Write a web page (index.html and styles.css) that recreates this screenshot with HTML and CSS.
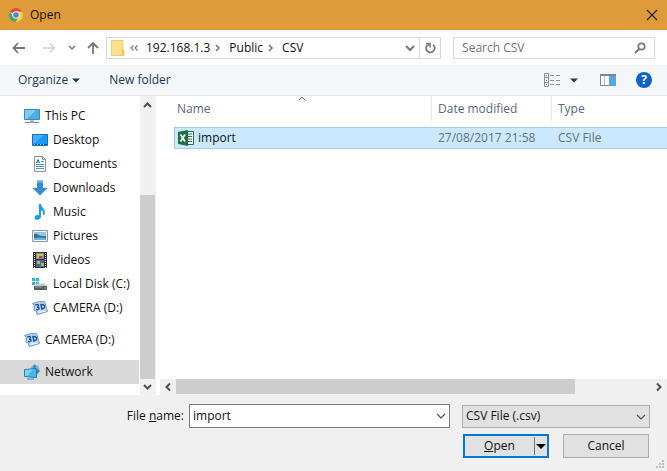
FILE: index.html
```html
<!DOCTYPE html>
<html lang="en">
<head>
<meta charset="utf-8">
<title>Open</title>
<link rel="stylesheet" href="styles.css">
</head>
<body>
<div class="dialog">
  <header class="titlebar">
    <svg class="icon" viewBox="0 0 16 16">
      <circle cx="8" cy="8" r="7" fill="#fbd03a"/>
      <path d="M8 8 1.9 4.5A7 7 0 0 1 14.1 4.5H8z" fill="#e2453a"/>
      <path d="M1.9 4.5A7 7 0 0 0 7.6 15L10.8 9.6 8 8 4.6 9z" fill="#3fa757"/>
      <circle cx="8" cy="8" r="3.7" fill="#f4f0e8"/>
      <circle cx="8" cy="8" r="2.8" fill="#4a83e8"/>
    </svg>
    <h1 class="title">Open</h1>
    <button class="close" aria-label="Close"><svg width="12" height="12" viewBox="0 0 12 12"><path d="M1 1 11 11M11 1 1 11" stroke="#222" stroke-width="1.2"/></svg></button>
  </header>

  <nav class="navbar">
    <div class="history">
      <button class="bare" aria-label="Back"><svg width="14" height="12" viewBox="0 0 14 12"><path d="M6 1 1.5 6 6 11M1.5 6H13" class="stroke" stroke-width="1.8"/></svg></button>
      <button class="bare forward" aria-label="Forward"><svg width="14" height="12" viewBox="0 0 14 12"><path d="M8 1.5 12.5 6 8 10.5M12.5 6H1" class="stroke pale" stroke-width="1.5"/></svg></button>
      <button class="bare recent" aria-label="Recent locations"><svg width="8" height="6" viewBox="0 0 8 6"><path d="M1 1 4 4 7 1" class="stroke" stroke-width="1.5"/></svg></button>
      <button class="bare" aria-label="Up"><svg width="14" height="14" viewBox="0 0 14 14"><path d="M2 7 7 2 12 7M7 2V13" class="stroke" stroke-width="1.8"/></svg></button>
    </div>
    <div class="address">
      <svg class="folder" width="14" height="16" viewBox="0 0 14 16"><path d="M.5.5H12V10L13 11V15.5H.5z" fill="#fce08c" stroke="#efcb68"/><path d="M11 9.5H13V15.5H10.500z" fill="#f0c958"/></svg>
      <svg class="overflow" width="8" height="6" viewBox="0 0 8 6"><path d="M3.500.5 1 3 3.500 5.500M7.500.5 5 3 7.500 5.500" class="stroke" stroke-width="1.200"/></svg>
      <a class="crumb host" href="#">192.168.1.3</a>
      <svg class="sep" width="6" height="8" viewBox="0 0 6 8"><path d="M1 1 4 4 1 7" class="stroke" stroke-width="1.600"/></svg>
      <a class="crumb" href="#">Public</a>
      <svg class="sep" width="6" height="8" viewBox="0 0 6 8"><path d="M1 1 4 4 1 7" class="stroke" stroke-width="1.600"/></svg>
      <a class="crumb" href="#">CSV</a>
      <button class="bare history-toggle" aria-label="Previous locations"><svg width="10" height="8" viewBox="0 0 10 8"><path d="M1 2 5 6 9 2" class="stroke" stroke-width="2"/></svg></button>
      <button class="bare refresh" aria-label="Refresh"><svg width="12" height="12" viewBox="0 0 12 12"><path d="M9 2.800A4.200 4.200 0 1 1 2.600 4.200L5.500 1.800" class="stroke" stroke-width="1.700"/><path d="M2 1.500H6V5.500" class="stroke" stroke-width="1.500"/></svg></button>
    </div>
    <div class="search">
      <input class="search-input" type="search" aria-label="Search CSV" placeholder="Search CSV">
      <svg width="12" height="12" viewBox="0 0 12 12"><circle cx="7.500" cy="4.500" r="3.200" class="stroke" stroke-width="1.700"/><path d="M5.200 7 1 11" class="stroke" stroke-width="2"/></svg>
    </div>
  </nav>

  <div class="toolbar">
    <button class="command">Organize <svg width="8" height="5" viewBox="0 0 8 5"><path d="M0 .5H8L4 4.500z" fill="#1e395b"/></svg></button>
    <button class="command">New folder</button>
    <div class="view-tools">
      <button class="bare view" aria-label="Change your view">
        <svg width="16" height="14" viewBox="0 0 16 14"><path d="M.5.5H4.500V13.500H.5zM.5 4.500H4.500M.5 9.500H4.500" fill="none" stroke="#8a9097"/><path d="M6 2.500H10M12 2.500H16M6 7.500H10M12 7.500H16M6 11.500H10M12 11.500H16" stroke="#8a9097"/><path d="M2 2.500H3M2 7.500H3M2 11.500H3" stroke="#3b79b4"/></svg>
        <svg width="8" height="5" viewBox="0 0 8 5"><path d="M0 .5H8L4 4.500z" fill="#1e395b"/></svg>
      </button>
      <button class="bare" aria-label="Show the preview pane"><svg width="16" height="12" viewBox="0 0 16 12"><path d="M.5.5H15.500V11.500H.5z" fill="#fff" stroke="#7c8791"/><path d="M0 0H16V2H0z" fill="#7c8791"/><path d="M4.500 2V11" stroke="#b5c0c9"/><path d="M9 2H16V12H9z" fill="#57a8df"/></svg></button>
      <button class="help" aria-label="Get help">?</button>
    </div>
  </div>

  <main class="browser">
    <aside class="sidebar">
      <ul class="tree">
        <li class="node"><svg class="icon" viewBox="0 0 16 16"><path d="M.5 1.500H15.500V11.500H.5z" fill="#48aee8" stroke="#4387b4"/><path d="M1 2H12L3 11H1z" fill="#80cbf4"/><path d="M6 12H10V14H6z" fill="#b3c0c9"/><path d="M1 14.500H15" stroke="#8297a5"/></svg>This PC</li>
        <li class="node child"><svg class="icon" viewBox="0 0 16 16"><path d="M.5 2.500H15.500V13.500H.5z" fill="#1c98f5" stroke="#0876c7"/><path d="M1 3H12L3 11H1z" fill="#42b0fa"/><path d="M1 12.500H15" stroke="#075792"/><path d="M2 12.500H14" stroke="#b8e1ff" stroke-dasharray="1 2"/></svg>Desktop</li>
        <li class="node child"><svg class="icon" viewBox="0 0 16 16"><path d="M2.500.5H10.500L13.500 3.500V15.500H2.500z" fill="#fff" stroke="#8b969e"/><path d="M10.500.5V3.500H13.500" fill="none" stroke="#8b969e"/><path d="M4.500 7 6 3.500 7.500 7M5 6H7" fill="none" stroke="#2775ae"/><path d="M9 5.500H12M4 8.500H12M4 10.500H12M4 12.500H12" stroke="#4b97ca"/></svg>Documents</li>
        <li class="node child"><svg class="icon" viewBox="0 0 16 16"><path d="M5 .5H11V8H15.500L8 15.500.5 8H5z" fill="#378bd5"/><path d="M5 1H11V3H5z" fill="#5da8e7"/></svg>Downloads</li>
        <li class="node child"><svg class="icon" viewBox="0 0 16 16"><path d="M7 0H9C9.500 4 14 4.500 12.500 11L11 11C11.500 8 10.500 6.500 9 6V12.500C9 14.500 7 16 4.500 15.700 1.800 15.400 2 11.500 5 11 6 10.800 7 11.300 7 11.300z" fill="#189ee2"/></svg>Music</li>
        <li class="node child"><svg class="icon" viewBox="0 0 16 16"><path d="M.5 2.500H15.500V13.500H.5z" fill="#fff" stroke="#8d969c"/><path d="M2 4H14V12H2z" fill="#8ccaf0"/><path d="M2 6C5 5 7 9 14 8V12H2z" fill="#376f8f"/><path d="M2 10.500Q8 8.500 14 10.500V12H2z" fill="#66b6df"/></svg>Pictures</li>
        <li class="node child"><svg class="icon" viewBox="0 0 16 16"><path d="M1 0H15V16H1z" fill="#303238"/><path d="M4 1H12V7H4z" fill="#7795b4"/><path d="M4 8H12V15H4z" fill="#406ba4"/><path d="M5 2H11V4H8V6H5z" fill="#e7b73c"/><path d="M7 4H10V6H7z" fill="#b34931"/><path d="M5 9H8V12H5zM9 11H12V14H9z" fill="#d8ac48"/><path d="M2.500 1V16M13.500 1V16" stroke="#eee" stroke-dasharray="1 1"/></svg>Videos</li>
        <li class="node child"><svg class="icon" viewBox="0 0 16 16"><path d="M0 2H3V5H0zM4 2H7V5H4zM0 6H3V9H0zM4 6H7V9H4z" fill="#20b2d8"/><path d="M2 10 5 7.500H12L15 10z" fill="#c3c9cd"/><path d="M2 10H15V14H2z" fill="#566066"/><path d="M3 11H10" stroke="#949da3"/><path d="M12 12H14" stroke="#60dc6e"/></svg>Local Disk (C:)</li>
        <li class="node child"><svg class="icon" viewBox="0 0 16 16"><path d="M.5 3.500Q6 1 12.500 1.500L15.500 11.500 5 14.500 4.500 11 2 10.500 2.500 6z" fill="#bcd8f2" stroke="#6f98c6"/><path d="M3 5.200Q6.500 3.500 6.500 5.500 6.500 6.500 5 7 7.800 7 7 8.800 6 10 4 9.500" fill="none" stroke="#1f5597" stroke-width="1.400"/><path d="M9 4.500 9.800 9Q13 8.500 12.500 6 12 4 9 4.500z" fill="none" stroke="#1f5597" stroke-width="1.500"/><path d="M6.500 12.500 13.500 11" stroke="#f2f9ff" stroke-width="1.200"/></svg>CAMERA (D:)</li>
        <li class="node group"><svg class="icon" viewBox="0 0 16 16"><path d="M.5 3.500Q6 1 12.500 1.500L15.500 11.500 5 14.500 4.500 11 2 10.500 2.500 6z" fill="#bcd8f2" stroke="#6f98c6"/><path d="M3 5.200Q6.500 3.500 6.500 5.500 6.500 6.500 5 7 7.800 7 7 8.800 6 10 4 9.500" fill="none" stroke="#1f5597" stroke-width="1.400"/><path d="M9 4.500 9.800 9Q13 8.500 12.500 6 12 4 9 4.500z" fill="none" stroke="#1f5597" stroke-width="1.500"/><path d="M6.500 12.500 13.500 11" stroke="#f2f9ff" stroke-width="1.200"/></svg>CAMERA (D:)</li>
        <li class="node group selected"><svg class="icon" viewBox="0 0 16 16"><circle cx="11" cy="5.500" r="4.500" fill="#7fb3d0"/><path d="M10 0 12 2 11.500 4 16 7 12.500 11 9 6z" fill="#2f86bd"/><path d="M.5 5.500 12.500 4.500V13.500L.5 12.500z" fill="#47b8ed" stroke="#287eae"/><path d="M1 6 9 5.500 3 12H1z" fill="#7bd0f5"/><path d="M3 15H10" stroke="#6da9c9" stroke-width="1.500"/></svg>Network</li>
      </ul>
      <div class="vscroll">
        <svg class="arrow" viewBox="0 0 16 16"><path d="M4 11 7.500 7.500 11 11" class="stroke dark" stroke-width="2"/></svg>
        <div class="vthumb"></div>
        <svg class="arrow" viewBox="0 0 16 16"><path d="M4 6 7.500 9.500 11 6" class="stroke dark" stroke-width="2"/></svg>
      </div>
    </aside>

    <section class="listing">
      <div class="files">
        <table class="table">
          <thead>
            <tr>
              <th class="name" aria-sort="ascending">Name<svg class="sort" width="8" height="5" viewBox="0 0 8 5"><path d="M.5 4.500 4 1 7.500 4.500" class="stroke" stroke-width="1"/></svg></th>
              <th class="date">Date modified</th>
              <th>Type</th>
            </tr>
          </thead>
          <tbody>
            <tr class="file">
              <td><div class="filename"><svg class="icon" viewBox="0 0 16 16"><path d="M8.500 1.500H15.500V14.500H8.500z" fill="#fff" stroke="#207245"/><path d="M9 4H14M9 6.500H14M9 9H14M9 11.500H14" stroke="#207245"/><path d="M0 2 10 0V16L0 14z" fill="#1d7044"/><path d="M2.500 4.500 7 11.500M7 4.500 2.500 11.500" stroke="#fff" stroke-width="1.700"/></svg>import</div></td>
              <td>27/08/2017 21:58</td>
              <td>CSV File</td>
            </tr>
          </tbody>
        </table>
      </div>
      <div class="hscroll">
        <svg class="arrow" viewBox="0 0 16 16"><path d="M10 4.500 6.500 8 10 11.500" class="stroke dark" stroke-width="2"/></svg>
        <div class="htrack"><div class="hthumb"></div></div>
        <svg class="arrow" viewBox="0 0 16 16"><path d="M6 4.500 9.500 8 6 11.500" class="stroke dark" stroke-width="2"/></svg>
      </div>
    </section>
  </main>

  <footer class="footer">
    <div class="fields">
      <label class="label" for="filename">File <u>n</u>ame:</label>
      <div class="combo">
        <input id="filename" class="combo-input" type="text" value="import">
        <button class="bare" aria-label="Recent file names"><svg width="10" height="6" viewBox="0 0 10 6"><path d="M1 1 5 5 9 1" class="stroke dark" stroke-width="1.200"/></svg></button>
      </div>
      <div class="filter">
        <select class="select" aria-label="File type"><option>CSV File (.csv)</option></select>
        <svg class="chevron" width="10" height="6" viewBox="0 0 10 6"><path d="M1 1 5 5 9 1" class="stroke dark" stroke-width="1.200"/></svg>
      </div>
    </div>
    <div class="actions">
      <div class="split">
        <button class="open"><u>O</u>pen</button>
        <button class="open-menu" aria-label="Open options"><svg width="10" height="5" viewBox="0 0 10 5"><path d="M0 0H10L5 5z" fill="#000"/></svg></button>
      </div>
      <button class="cancel">Cancel</button>
    </div>
    <svg class="grip" width="8" height="8" viewBox="0 0 8 8"><path d="M6 0H8V2H6zM3 3H5V5H3zM6 3H8V5H6zM0 6H2V8H0zM3 6H5V8H3zM6 6H8V8H6z" fill="#bcbcbc"/></svg>
  </footer>
</div>
</body>
</html>
```
FILE: styles.css
```css
* { box-sizing: border-box; }

body {
  margin: 0;
  font: 12px/16px "Open Sans", "Noto Sans", sans-serif;
  color: #111;
}

button, input, select {
  margin: 0;
  padding: 0;
  border: 0;
  background: none;
  font: inherit;
  color: inherit;
}

svg { display: block; flex: none; }
.icon { width: 16px; height: 16px; }
.stroke { fill: none; stroke: #777; }
.pale { stroke: #d0d0d0; }
.dark { stroke: #505050; }
.bare { display: flex; align-items: center; }

.dialog {
  display: flex;
  flex-direction: column;
  min-height: 100vh;
  background: #fff;
}

/* Title bar */
.titlebar {
  display: flex;
  align-items: center;
  height: 30px;
  padding: 0 9px 0 8px;
  gap: 6px;
  background: #df9a39;
}
.title { margin: 0; flex: 1; font-size: 12px; font-weight: 400; }

/* Navigation row */
.navbar {
  display: flex;
  align-items: center;
  height: 35px;
  padding: 0 12px;
  gap: 12px;
}
.history { display: flex; align-items: center; width: 82px; }
.forward { margin-left: 16px; }
.recent { margin: 0 10px 0 12px; }
.address {
  display: flex;
  align-items: center;
  flex: 1;
  height: 22px;
  padding-left: 4px;
  border: 1px solid #d9d9d9;
}
.overflow { margin: 0 8px 0 5px; }
.crumb { color: inherit; text-decoration: none; }
.sep { margin: 0 8px 0 5px; }
.history-toggle { margin-left: auto; padding: 0 4px; }
.refresh {
  height: 20px;
  padding: 0 4px;
  border-left: 1px solid #d9d9d9;
}
.search {
  display: flex;
  align-items: center;
  width: 31.4%;
  height: 22px;
  padding: 0 8px;
  border: 1px solid #d9d9d9;
}
.search-input { flex: 1; min-width: 0; outline: 0; }
.search-input::placeholder { color: #767676; opacity: 1; }

/* Command bar */
.toolbar {
  display: flex;
  align-items: center;
  height: 31px;
  padding: 0 15px 0 18px;
  gap: 29px;
  border-bottom: 1px solid #e4e7ea;
  background: #f4f6f9;
  color: #1e395b;
}
.command { display: flex; align-items: center; gap: 4px; }
.view-tools { display: flex; align-items: center; gap: 20px; margin-left: auto; }
.view { gap: 10px; margin-right: 2px; }
.help {
  width: 16px;
  height: 16px;
  border-radius: 50%;
  background: #0b66c3;
  color: #fff;
  font-weight: 700;
  text-align: center;
}

/* Folder tree and file list */
.browser { display: flex; flex: 1; }
.sidebar { display: flex; width: 156px; }
.tree { flex: 1; margin: 0; padding: 8px 0 11px; list-style: none; }
.node {
  display: flex;
  align-items: center;
  height: 24px;
  margin-right: 1px;
  padding-left: 24px;
  gap: 5px;
  white-space: nowrap;
}
.child { padding-left: 32px; }
.group { margin-top: 8px; }
.selected { background: #d9d9d9; }
.vscroll {
  display: flex;
  flex-direction: column;
  width: 16px;
  background: #f0f0f0;
}
.arrow { width: 16px; height: 16px; }
.vthumb { width: 15px; flex: 1; margin-top: 83px; background: #cdcdcd; }

.listing {
  display: flex;
  flex: 1;
  flex-direction: column;
  min-width: 0;
  margin-left: 4px;
}
.files { flex: 1; padding-left: 14px; }
.table {
  width: 100%;
  table-layout: fixed;
  border-spacing: 0;
}
.table th {
  height: 31px;
  padding: 0 0 6px 7px;
  background: linear-gradient(#e3e6ea, #e3e6ea) left top / 1px 25px no-repeat;
  color: #5a6780;
  font-weight: 400;
  text-align: left;
}
.table .name { position: relative; width: 257px; padding-left: 3px; background: none; }
.table .date { width: 120px; }
.sort { position: absolute; top: 0; left: calc(50% - 5px); }
.table td {
  height: 22px;
  padding: 0 0 0 7px;
  border: solid #a4cbe8;
  border-width: 1px 0;
  background: #cce8ff;
  color: #65717c;
}
.table td:first-child { padding-left: 3px; border-left-width: 1px; color: #111; }
.filename { display: flex; align-items: center; gap: 4px; }

.hscroll { display: flex; height: 16px; background: #f0f0f0; }
.htrack { flex: 1; }
.hthumb { width: 84%; height: 15px; background: #cdcdcd; }

/* File name and actions */
.footer {
  position: relative;
  height: 76px;
  padding: 9px 17px 0 0;
  background: #f0f0f0;
}
.fields { display: flex; align-items: center; height: 24px; }
.label { width: 184px; margin-right: 5px; text-align: right; }
.combo {
  display: flex;
  flex: 1;
  height: 24px;
  margin-right: 12px;
  padding: 0 3px;
  border: 1px solid #7a7a7a;
  background: #fff;
}
.combo-input { flex: 1; min-width: 0; outline: 0; }
.filter { position: relative; width: 188px; }
.select {
  display: block;
  width: 100%;
  height: 23px;
  padding-left: 3px;
  border: 1px solid #adadad;
  border-radius: 0;
  background: #e1e1e1;
  appearance: none;
}
.chevron { position: absolute; top: 9px; right: 4px; pointer-events: none; }
.actions {
  display: flex;
  justify-content: flex-end;
  gap: 14px;
  margin-top: 6px;
  padding-right: 1px;
}
.split {
  display: flex;
  align-items: center;
  width: 86px;
  height: 24px;
  border: 2px solid #0078d7;
  background: #e1e1e1;
}
.open { flex: 1; }
.open-menu {
  display: flex;
  align-items: center;
  height: 18px;
  padding: 0 1px;
  border-left: 1px solid #777;
}
.cancel {
  width: 86px;
  height: 24px;
  border: 1px solid #adadad;
  background: #e1e1e1;
}
.grip { position: absolute; right: 3px; bottom: 3px; }
```
